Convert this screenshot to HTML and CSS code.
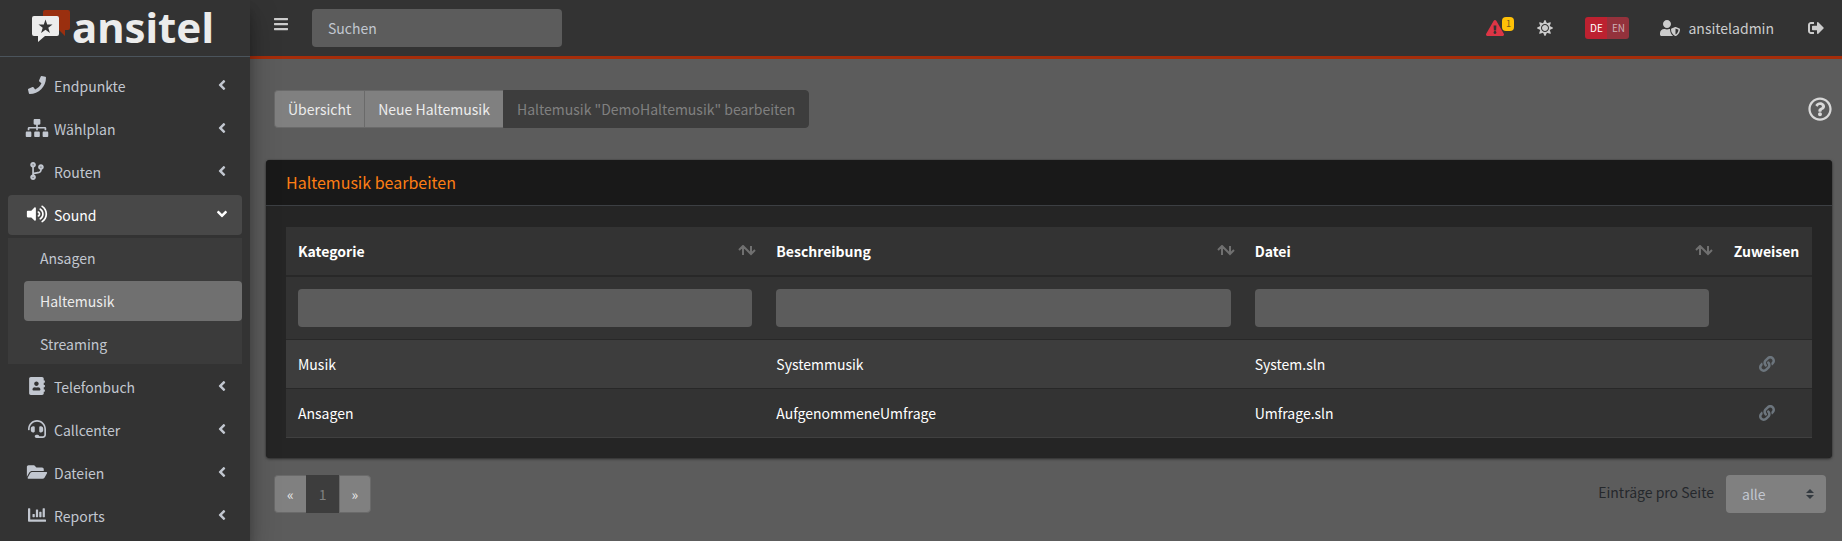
FILE: index.html
```html
<!DOCTYPE html>
<html lang="de">
<head>
    <meta charset="utf-8">
    <title>ansitel - Haltemusik bearbeiten</title>
    <link rel="stylesheet" href="styles.css">
</head>
<body>

<!-- icon set -->
<svg class="sprite" aria-hidden="true">
    <symbol id="bars" viewBox="0 0 448 512"><path d="M16 132h416c8.837 0 16-7.163 16-16V76c0-8.837-7.163-16-16-16H16C7.163 60 0 67.163 0 76v40c0 8.837 7.163 16 16 16zm0 160h416c8.837 0 16-7.163 16-16v-40c0-8.837-7.163-16-16-16H16c-8.837 0-16 7.163-16 16v40c0 8.837 7.163 16 16 16zm0 160h416c8.837 0 16-7.163 16-16v-40c0-8.837-7.163-16-16-16H16c-8.837 0-16 7.163-16 16v40c0 8.837 7.163 16 16 16z"/></symbol>
    <symbol id="phone" viewBox="0 0 512 512"><path d="M493.4 24.6l-104-24c-11.3-2.6-22.9 3.3-27.5 13.9l-48 112c-4.2 9.8-1.4 21.3 6.9 28l60.6 49.6c-36 76.7-98.9 140.5-177.2 177.2l-49.6-60.6c-6.8-8.3-18.2-11.1-28-6.9l-112 48C3.9 366.5-2 378.1.6 389.4l24 104C27.1 504.2 36.7 512 48 512c256.1 0 464-207.5 464-464 0-11.2-7.7-20.9-18.6-23.4z"/></symbol>
    <symbol id="sitemap" viewBox="0 0 640 512"><path d="M128 352H32c-17.67 0-32 14.33-32 32v96c0 17.67 14.33 32 32 32h96c17.67 0 32-14.33 32-32v-96c0-17.67-14.33-32-32-32zm-24-80h192v48h48v-48h192v48h48v-57.59c0-21.17-17.23-38.41-38.41-38.41H344v-64h40c17.67 0 32-14.33 32-32V32c0-17.67-14.33-32-32-32H256c-17.67 0-32 14.33-32 32v96c0 17.67 14.33 32 32 32h40v64H94.41C73.23 224 56 241.23 56 262.41V320h48v-48zm264 80h-96c-17.67 0-32 14.33-32 32v96c0 17.67 14.33 32 32 32h96c17.67 0 32-14.33 32-32v-96c0-17.67-14.33-32-32-32zm240 0h-96c-17.67 0-32 14.33-32 32v96c0 17.67 14.33 32 32 32h96c17.67 0 32-14.33 32-32v-96c0-17.67-14.33-32-32-32z"/></symbol>
    <symbol id="branch" viewBox="0 0 384 512"><path d="M384 144c0-44.2-35.8-80-80-80s-80 35.8-80 80c0 36.4 24.3 67.1 57.5 76.8-.6 16.1-4.2 28.5-11 36.9-15.4 19.2-49.3 22.4-85.2 25.7-28.2 2.6-57.4 5.4-81.3 16.9v-144c32.5-10.2 56-40.5 56-76.3 0-44.2-35.8-80-80-80S0 35.8 0 80c0 35.8 23.5 66.1 56 76.3v199.3C23.5 365.9 0 396.2 0 432c0 44.2 35.8 80 80 80s80-35.8 80-80c0-34-21.2-63.1-51.2-74.6 3.1-5.2 7.8-9.8 14.9-13.4 16.2-8.2 40.4-10.4 66.1-12.8 42.2-3.9 90-8.4 118.2-43.4 14-17.4 21.1-39.8 21.6-67.9 31.6-10.8 54.4-40.7 54.4-75.9zM80 64c8.8 0 16 7.2 16 16s-7.2 16-16 16-16-7.2-16-16 7.2-16 16-16zm0 384c-8.8 0-16-7.2-16-16s7.2-16 16-16 16 7.2 16 16-7.2 16-16 16zm224-320c8.8 0 16 7.2 16 16s-7.2 16-16 16-16-7.2-16-16 7.2-16 16-16z"/></symbol>
    <symbol id="volume" viewBox="0 0 576 512"><path d="M215.03 71.05L126.06 160H24c-13.26 0-24 10.74-24 24v144c0 13.25 10.74 24 24 24h102.06l88.97 88.95c15.03 15.03 40.97 4.47 40.97-16.97V88.02c0-21.46-25.96-31.98-40.97-16.97zm233.32-51.08c-11.17-7.33-26.18-4.24-33.51 6.95-7.34 11.17-4.22 26.18 6.95 33.51 66.27 43.49 105.82 116.6 105.82 195.58 0 78.98-39.55 152.09-105.82 195.58-11.17 7.32-14.29 22.34-6.95 33.5 7.04 10.71 21.93 14.56 33.51 6.95C528.27 439.58 576 351.33 576 256S528.27 72.43 448.35 19.97zM480 256c0-63.53-32.06-121.94-85.77-156.24-11.19-7.14-26.03-3.82-33.12 7.46s-3.78 26.21 7.41 33.36C408.27 165.97 432 209.11 432 256s-23.73 90.02-63.48 115.42c-11.19 7.14-14.5 22.07-7.41 33.36 6.51 10.36 21.12 15.14 33.12 7.46C447.94 377.94 480 319.54 480 256zm-141.77-76.87c-11.58-6.33-26.19-2.16-32.61 9.45-6.39 11.61-2.16 26.2 9.45 32.61C327.98 228.28 336 241.63 336 256c0 14.38-8.02 27.72-20.92 34.81-11.61 6.41-15.84 21-9.45 32.61 6.43 11.66 21.05 15.8 32.61 9.45 28.23-15.55 45.77-45 45.77-76.88s-17.54-61.32-45.78-76.86z"/></symbol>
    <symbol id="book" viewBox="0 0 448 512"><path d="M436 160c6.6 0 12-5.4 12-12v-40c0-6.6-5.4-12-12-12h-20V48c0-26.5-21.5-48-48-48H48C21.5 0 0 21.5 0 48v416c0 26.5 21.5 48 48 48h320c26.5 0 48-21.5 48-48v-48h20c6.6 0 12-5.4 12-12v-40c0-6.6-5.4-12-12-12h-20v-64h20c6.6 0 12-5.4 12-12v-40c0-6.6-5.4-12-12-12h-20v-64h20zm-228-32c35.3 0 64 28.7 64 64s-28.7 64-64 64-64-28.7-64-64 28.7-64 64-64zm112 236.8c0 10.6-10 19.2-22.4 19.2H118.4C106 384 96 375.4 96 364.8v-19.2c0-31.8 30.1-57.6 67.2-57.6h5c12.3 5.1 25.7 8 39.8 8s27.6-2.9 39.8-8h5c37.1 0 67.2 25.8 67.2 57.6v19.2z"/></symbol>
    <symbol id="headset" viewBox="0 0 512 512"><path d="M192 208c0-17.67-14.33-32-32-32h-16c-35.35 0-64 28.65-64 64v48c0 35.35 28.65 64 64 64h16c17.67 0 32-14.33 32-32V208zm176 144c35.35 0 64-28.65 64-64v-48c0-35.35-28.65-64-64-64h-16c-17.67 0-32 14.33-32 32v112c0 17.67 14.33 32 32 32h16zM256 0C113.18 0 4.58 118.83 0 256v16c0 8.84 7.16 16 16 16h16c8.84 0 16-7.16 16-16v-16c0-114.69 93.31-208 208-208s208 93.31 208 208h-.12c.08 2.43.12 165.72.12 165.72 0 23.35-18.93 42.28-42.28 42.28H320c0-26.51-21.49-48-48-48h-32c-26.51 0-48 21.49-48 48s21.49 48 48 48h181.72c49.86 0 90.28-40.42 90.28-90.28V256C507.42 118.83 398.82 0 256 0z"/></symbol>
    <symbol id="folder" viewBox="0 0 576 512"><path d="M572.694 292.093L500.27 416.248A63.997 63.997 0 0 1 444.989 448H45.025c-18.523 0-30.064-20.093-20.731-36.093l72.424-124.155A64 64 0 0 1 152 256h399.964c18.523 0 30.064 20.093 20.73 36.093zM152 224h328v-48c0-26.51-21.49-48-48-48H272l-64-64H48C21.49 64 0 85.49 0 112v278.046l69.077-118.418C86.214 242.25 117.989 224 152 224z"/></symbol>
    <symbol id="chart" viewBox="0 0 512 512"><path d="M332.8 320h38.4c6.4 0 12.8-6.4 12.8-12.8V172.8c0-6.4-6.4-12.8-12.8-12.8h-38.4c-6.4 0-12.8 6.4-12.8 12.8v134.4c0 6.4 6.4 12.8 12.8 12.8zm96 0h38.4c6.4 0 12.8-6.4 12.8-12.8V76.8c0-6.4-6.4-12.8-12.8-12.8h-38.4c-6.4 0-12.8 6.4-12.8 12.8v230.4c0 6.4 6.4 12.8 12.8 12.8zm-288 0h38.4c6.4 0 12.8-6.4 12.8-12.8v-70.4c0-6.4-6.4-12.8-12.8-12.8h-38.4c-6.4 0-12.8 6.4-12.8 12.8v70.4c0 6.4 6.4 12.8 12.8 12.8zm96 0h38.4c6.4 0 12.8-6.4 12.8-12.8V108.8c0-6.4-6.4-12.8-12.8-12.8h-38.4c-6.4 0-12.8 6.4-12.8 12.8v198.4c0 6.4 6.4 12.8 12.8 12.8zM496 384H64V80c0-8.84-7.16-16-16-16H16C7.16 64 0 71.16 0 80v336c0 17.67 14.33 32 32 32h464c8.84 0 16-7.16 16-16v-32c0-8.84-7.16-16-16-16z"/></symbol>
    <symbol id="angle" viewBox="0 0 256 512"><path d="M31.7 239l136-136c9.4-9.4 24.6-9.4 33.9 0l22.6 22.6c9.4 9.4 9.4 24.6 0 33.9L127.9 256l96.4 96.4c9.4 9.4 9.4 24.6 0 33.9L201.7 409c-9.4 9.4-24.6 9.4-33.9 0l-136-136c-9.5-9.4-9.5-24.6-.1-34z"/></symbol>
    <symbol id="warning" viewBox="0 0 576 512"><path d="M569.517 440.013C587.975 472.007 564.806 512 527.94 512H48.054c-36.937 0-59.999-40.055-41.577-71.987L246.423 23.985c18.467-32.009 64.72-31.951 83.154 0l239.94 416.028zM288 354c-25.405 0-46 20.595-46 46s20.595 46 46 46 46-20.595 46-46-20.595-46-46-46zm-43.673-165.346l7.418 136c.347 6.364 5.609 11.346 11.982 11.346h48.546c6.373 0 11.635-4.982 11.982-11.346l7.418-136c.375-6.874-5.098-12.654-11.982-12.654h-63.383c-6.884 0-12.356 5.78-11.981 12.654z"/></symbol>
    <symbol id="sun" viewBox="0 0 512 512"><path d="M256 160c-52.9 0-96 43.1-96 96s43.1 96 96 96 96-43.1 96-96-43.1-96-96-96zm246.4 80.5l-94.7-47.3 33.5-100.4c4.5-13.6-8.4-26.5-21.9-21.9l-100.4 33.5-47.4-94.8c-6.4-12.8-24.6-12.8-31 0l-47.3 94.7L92.7 70.8c-13.6-4.5-26.5 8.4-21.9 21.9l33.5 100.4-94.7 47.4c-12.8 6.4-12.8 24.6 0 31l94.7 47.3-33.5 100.5c-4.5 13.6 8.4 26.5 21.9 21.9l100.4-33.5 47.3 94.7c6.4 12.8 24.6 12.8 31 0l47.3-94.7 100.4 33.5c13.6 4.5 26.5-8.4 21.9-21.9l-33.5-100.4 94.7-47.3c13-6.5 13-24.7.2-31.1zm-155.9 106c-49.9 49.9-131.1 49.9-181 0-49.9-49.9-49.9-131.1 0-181 49.9-49.9 131.1-49.9 181 0 49.9 49.9 49.9 131.1 0 181z"/></symbol>
    <symbol id="user" viewBox="0 0 640 512"><path d="M622.3 271.1l-115.2-45c-4.1-1.6-12.6-3.7-22.2 0l-115.2 45c-10.7 4.2-17.7 14-17.7 24.9 0 111.6 68.7 188.8 132.9 213.9 9.6 3.7 18 1.6 22.2 0C558.4 489.9 640 420.5 640 296c0-10.9-7-20.7-17.7-24.9zM496 462.4V273.3l95.5 37.3c-5.6 87.1-60.9 135.4-95.5 151.8zM224 256c70.7 0 128-57.3 128-128S294.7 0 224 0 96 57.3 96 128s57.3 128 128 128zm96 40c0-2.5.8-4.8 1.1-7.2-2.5-.1-4.9-.8-7.5-.8h-16.7c-22.2 10.2-46.9 16-72.9 16s-50.6-5.8-72.9-16h-16.7C60.2 288 0 348.2 0 422.4V464c0 26.5 21.5 48 48 48h352c6.8 0 13.3-1.5 19.2-4-54-42.9-99.2-116.7-99.2-212z"/></symbol>
    <symbol id="logout" viewBox="0 0 512 512"><path d="M497 273L329 441c-15 15-41 4.5-41-17v-96H152c-13.3 0-24-10.7-24-24v-96c0-13.3 10.7-24 24-24h136V88c0-21.4 25.9-32 41-17l168 168c9.3 9.4 9.3 24.6 0 34zM192 436v-40c0-6.6-5.4-12-12-12H96c-17.7 0-32-14.3-32-32V160c0-17.7 14.3-32 32-32h84c6.6 0 12-5.4 12-12V76c0-6.6-5.4-12-12-12H96c-53 0-96 43-96 96v192c0 53 43 96 96 96h84c6.6 0 12-5.4 12-12z"/></symbol>
    <symbol id="question" viewBox="0 0 512 512"><path d="M256 8C119.043 8 8 119.083 8 256c0 136.997 111.043 248 248 248s248-111.003 248-248C504 119.083 392.957 8 256 8zm0 448c-110.532 0-200-89.431-200-200 0-110.495 89.472-200 200-200 110.491 0 200 89.471 200 200 0 110.53-89.431 200-200 200zm107.244-255.2c0 67.052-72.421 68.084-72.421 92.863V300c0 6.627-5.373 12-12 12h-45.647c-6.627 0-12-5.373-12-12v-8.659c0-35.745 27.1-50.034 47.579-61.516 17.561-9.845 28.324-16.541 28.324-29.579 0-17.246-21.999-28.693-39.784-28.693-23.189 0-33.894 10.977-48.942 29.969-4.057 5.12-11.46 6.071-16.666 2.124l-27.824-21.098c-5.107-3.872-6.251-11.066-2.644-16.363C184.846 131.491 214.94 112 261.794 112c49.071 0 101.45 38.304 101.45 88.8zM298 368c0 23.159-18.841 42-42 42s-42-18.841-42-42 18.841-42 42-42 42 18.841 42 42z"/></symbol>
    <symbol id="chain" viewBox="0 0 512 512"><path d="M326.612 185.391c59.747 59.809 58.927 155.698.36 214.59-.11.12-.24.25-.36.37l-67.2 67.2c-59.27 59.27-155.699 59.262-214.96 0-59.27-59.26-59.27-155.7 0-214.96l37.106-37.106c9.84-9.84 26.786-3.3 27.294 10.606.648 17.722 3.826 35.527 9.69 52.721 1.986 5.822.567 12.262-3.783 16.612l-13.087 13.087c-28.026 28.026-28.905 73.66-1.155 101.96 28.024 28.579 74.086 28.749 102.325.51l67.2-67.19c28.191-28.191 28.073-73.757 0-101.83-3.701-3.694-7.429-6.564-10.341-8.569a16.037 16.037 0 0 1-6.947-12.606c-.396-10.567 3.348-21.456 11.698-29.806l21.054-21.055c5.521-5.521 14.182-6.199 20.584-1.731a152.482 152.482 0 0 1 20.522 17.197zM467.547 44.449c-59.261-59.262-155.69-59.27-214.96 0l-67.2 67.2c-.12.12-.25.25-.36.37-58.566 58.892-59.387 154.781.36 214.59a152.454 152.454 0 0 0 20.521 17.196c6.402 4.468 15.064 3.789 20.584-1.731l21.054-21.055c8.35-8.35 12.094-19.239 11.698-29.806a16.037 16.037 0 0 0-6.947-12.606c-2.912-2.005-6.64-4.875-10.341-8.569-28.073-28.073-28.191-73.639 0-101.83l67.2-67.19c28.239-28.239 74.3-28.069 102.325.51 27.75 28.3 26.872 73.934-1.155 101.96l-13.087 13.087c-4.35 4.35-5.769 10.79-3.783 16.612 5.864 17.194 9.042 34.999 9.69 52.721.509 13.906 17.454 20.446 27.294 10.606l37.106-37.106c59.271-59.259 59.271-155.699.001-214.959z"/></symbol>
    <symbol id="sort" viewBox="0 0 18 12"><path d="M1 5l4-4 8 8 4-4M5 1v9M13 1v8" fill="none" stroke="currentColor" stroke-width="2"/></symbol>
</svg>

<div class="wrapper">
    <aside class="sidebar">
        <a href="#" class="brand">
            <svg class="brand-icon" viewBox="0 0 38 33" aria-hidden="true">
                <path fill="#9a2f0f" d="M13 0h23q2 0 2 2v16q0 2-2 2h-3v6l-6-6H11V2q0-2 2-2z"/>
                <path fill="#ececec" d="M2 6h23q2 0 2 2v16q0 2-2 2H13l-7 6v-6H2q-2 0-2-2V8q0-2 2-2z"/>
                <path fill="#333" d="M13.500 9.500l1.700 5h5.300l-4.200 3.200 1.600 5.300-4.400-3.300L9.100 23l1.600-5.300-4.200-3.200h5.300z"/>
            </svg>
            <span class="brand-text">ansitel</span>
        </a>
        <nav class="menu">
            <a href="#" class="menu-link"><svg class="menu-icon"><use href="#phone"/></svg>Endpunkte<svg class="arrow"><use href="#angle"/></svg></a>
            <a href="#" class="menu-link"><svg class="menu-icon"><use href="#sitemap"/></svg>Wählplan<svg class="arrow"><use href="#angle"/></svg></a>
            <a href="#" class="menu-link"><svg class="menu-icon"><use href="#branch"/></svg>Routen<svg class="arrow"><use href="#angle"/></svg></a>
            <a href="#" class="menu-link open"><svg class="menu-icon"><use href="#volume"/></svg>Sound<svg class="arrow"><use href="#angle"/></svg></a>
            <div class="submenu">
                <a href="#" class="submenu-link">Ansagen</a>
                <a href="#" class="submenu-link active">Haltemusik</a>
                <a href="#" class="submenu-link">Streaming</a>
            </div>
            <a href="#" class="menu-link"><svg class="menu-icon"><use href="#book"/></svg>Telefonbuch<svg class="arrow"><use href="#angle"/></svg></a>
            <a href="#" class="menu-link"><svg class="menu-icon"><use href="#headset"/></svg>Callcenter<svg class="arrow"><use href="#angle"/></svg></a>
            <a href="#" class="menu-link"><svg class="menu-icon"><use href="#folder"/></svg>Dateien<svg class="arrow"><use href="#angle"/></svg></a>
            <a href="#" class="menu-link"><svg class="menu-icon"><use href="#chart"/></svg>Reports<svg class="arrow"><use href="#angle"/></svg></a>
        </nav>
    </aside>

    <div class="page">
        <header class="topbar">
            <button class="toggle" aria-label="Menü"><svg><use href="#bars"/></svg></button>
            <input class="control search" type="search" placeholder="Suchen" aria-label="Suchen">
            <div class="topbar-right">
                <a href="#" class="alert" aria-label="Warnungen"><svg class="icon-warning"><use href="#warning"/></svg><span class="badge">1</span></a>
                <button class="theme" aria-label="Design"><svg class="icon"><use href="#sun"/></svg></button>
                <div class="lang">
                    <button class="lang-button">DE</button>
                    <button class="lang-button inactive">EN</button>
                </div>
                <a href="#" class="account"><svg class="icon-user"><use href="#user"/></svg>ansiteladmin</a>
                <a href="#" class="logout" aria-label="Abmelden"><svg class="icon"><use href="#logout"/></svg></a>
            </div>
        </header>

        <main class="content">
            <div class="toolbar">
                <div class="group">
                    <a href="#" class="group-item">Übersicht</a>
                    <a href="#" class="group-item">Neue Haltemusik</a>
                    <span class="group-item current">Haltemusik "DemoHaltemusik" bearbeiten</span>
                </div>
                <a href="#" class="help" aria-label="Hilfe"><svg><use href="#question"/></svg></a>
            </div>

            <section class="card">
                <h1 class="card-header">Haltemusik bearbeiten</h1>
                <div class="card-body">
                    <table class="table">
                        <thead>
                            <tr>
                                <th><div class="sortable">Kategorie<svg><use href="#sort"/></svg></div></th>
                                <th><div class="sortable">Beschreibung<svg><use href="#sort"/></svg></div></th>
                                <th><div class="sortable">Datei<svg><use href="#sort"/></svg></div></th>
                                <th class="assign">Zuweisen</th>
                            </tr>
                        </thead>
                        <tbody>
                            <tr>
                                <td><input class="control" type="text" aria-label="Kategorie filtern"></td>
                                <td><input class="control" type="text" aria-label="Beschreibung filtern"></td>
                                <td><input class="control" type="text" aria-label="Datei filtern"></td>
                                <td></td>
                            </tr>
                            <tr class="striped">
                                <td>Musik</td>
                                <td>Systemmusik</td>
                                <td>System.sln</td>
                                <td class="assign"><a href="#" aria-label="Zuweisen"><svg class="icon"><use href="#chain"/></svg></a></td>
                            </tr>
                            <tr>
                                <td>Ansagen</td>
                                <td>AufgenommeneUmfrage</td>
                                <td>Umfrage.sln</td>
                                <td class="assign"><a href="#" aria-label="Zuweisen"><svg class="icon"><use href="#chain"/></svg></a></td>
                            </tr>
                        </tbody>
                    </table>
                </div>
            </section>

            <div class="footer">
                <nav class="group" aria-label="Seiten">
                    <a href="#" class="group-item">«</a>
                    <span class="group-item current">1</span>
                    <a href="#" class="group-item">»</a>
                </nav>
                <div class="per-page">
                    <label for="perPage">Einträge pro Seite</label>
                    <div class="select">
                        <select id="perPage">
                            <option>alle</option>
                            <option>10</option>
                            <option>25</option>
                        </select>
                        <svg viewBox="0 0 8 10" aria-hidden="true"><path d="M4 0l4 4H0zM0 6h8l-4 4z"/></svg>
                    </div>
                </div>
            </div>
        </main>
    </div>
</div>

</body>
</html>
```

FILE: styles.css
```css
* {
    box-sizing: border-box;
}

body {
    margin: 0;
    background-color: #5c5c5c;
    color: #fff;
    font-family: "Noto Sans CJK JP", "Noto Sans", sans-serif;
    font-size: 14px;
    line-height: 24px;
}

a {
    color: inherit;
    text-decoration: none;
}

button {
    padding: 0;
    border: none;
    background: none;
    color: inherit;
    font: inherit;
    cursor: pointer;
}

svg {
    display: block;
    fill: currentColor;
}

.sprite {
    display: none;
}

.wrapper {
    display: flex;
    min-height: 100vh;
}

/* sidebar */
.sidebar {
    position: relative;
    z-index: 2;
    flex: 0 0 250px;
    background-color: #333;
    color: #c2c7d0;
    box-shadow: 0 14px 28px rgba(0, 0, 0, 0.25), 0 10px 10px rgba(0, 0, 0, 0.22);
}

.brand {
    display: flex;
    gap: 2px;
    height: 57px;
    padding: 10px 32px;
    border-bottom: 1px solid #4b545c;
}

.brand-icon {
    flex: none;
    width: 38px;
    height: 33px;
}

.brand-text {
    color: #ececec;
    font-family: "Noto Sans", sans-serif;
    font-size: 42px;
    font-weight: 700;
    line-height: 34px;
}

.menu {
    display: flex;
    flex-direction: column;
    gap: 3px;
    padding: 9px 8px 0;
}

.menu-link {
    display: flex;
    align-items: center;
    gap: 4px;
    height: 40px;
    padding: 0 16px;
    border-radius: 4px;
}

.menu-icon {
    width: 26px;
    height: 18px;
    margin-bottom: 2px;
}

.arrow {
    width: 8px;
    height: 16px;
    margin-left: auto;
    margin-bottom: 2px;
}

.open {
    background-color: #484848;
    color: #fff;
}

.open .arrow {
    transform: rotate(-90deg);
}

.submenu {
    display: flex;
    flex-direction: column;
    gap: 3px;
    padding-left: 16px;
    background-color: #3b3b3b;
}

.submenu-link {
    padding: 8px 16px;
    border-radius: 4px;
}

.submenu-link.active {
    background-color: #707070;
    color: #ececec;
}

/* top bar */
.page {
    flex: 1;
    min-width: 0;
}

.topbar {
    display: flex;
    align-items: center;
    height: 59px;
    padding: 0 18px 0 24px;
    border-bottom: 3px solid #a52d0a;
    background-color: #333;
    color: #ccc;
}

.toggle {
    margin-bottom: 8px;
}

.toggle svg {
    width: 14px;
    height: 16px;
}

.control {
    display: block;
    width: 100%;
    height: 38px;
    padding: 0 16px;
    border: none;
    border-radius: 4px;
    background-color: #5c5c5c;
    color: #fff;
    font: inherit;
}

.search {
    width: 250px;
    margin-left: 24px;
}

.search::placeholder {
    color: #c2c7d0;
    opacity: 1;
}

.topbar-right {
    display: flex;
    align-items: center;
    margin-left: auto;
}

.icon {
    width: 16px;
    height: 16px;
}

.alert {
    position: relative;
    color: #dc3545;
}

.icon-warning {
    width: 18px;
    height: 16px;
}

.badge {
    position: absolute;
    top: -3px;
    left: 16px;
    width: 12px;
    border-radius: 4px;
    background-color: #ffc107;
    color: #705a1c;
    font-size: 9px;
    line-height: 14px;
    text-align: center;
}

.theme {
    margin-left: 33px;
}

.lang {
    display: flex;
    margin-left: 32px;
    border-radius: 3px;
    overflow: hidden;
}

.lang-button {
    width: 22px;
    background-color: #bd2130;
    color: #fff;
    font-size: 10px;
    line-height: 22px;
}

.lang-button.inactive {
    background-color: #94323c;
    color: #ccb0b4;
}

.account {
    display: flex;
    align-items: center;
    gap: 8px;
    margin-left: 31px;
}

.icon-user {
    width: 20px;
    height: 16px;
}

.logout {
    margin-left: 34px;
}

/* content */
.content {
    padding: 31px 10px 28px 16px;
}

.toolbar {
    display: flex;
    align-items: center;
    justify-content: space-between;
    padding-left: 8px;
}

.group {
    display: flex;
    height: 38px;
}

.group-item {
    padding: 6px 12px;
    border: 1px solid #6a6a6a;
    border-right-width: 0;
    background-color: #808080;
    color: #ececec;
}

.toolbar .group-item {
    padding: 6px 13px;
}

.group-item:first-child {
    border-radius: 4px 0 0 4px;
}

.group-item:last-child {
    border-right-width: 1px;
    border-radius: 0 4px 4px 0;
}

.group-item.current {
    border-color: #3d3d3d;
    background-color: #3d3d3d;
    color: #808080;
}

.help {
    color: #d8d8d8;
}

.help svg {
    width: 24px;
    height: 24px;
}

.card {
    margin-top: 32px;
    border-radius: 4px;
    background-color: #252525;
    box-shadow: 0 0 1px rgba(0, 0, 0, 0.5), 0 1px 3px rgba(0, 0, 0, 0.5);
}

.card-header {
    margin: 0;
    padding: 10px 20px 11px;
    border-bottom: 1px solid #3c3f43;
    border-radius: 4px 4px 0 0;
    background-color: #191919;
    color: #fd7e14;
    font-size: 16px;
    font-weight: 400;
    line-height: 24px;
}

.card-body {
    padding: 21px 20px 20px;
}

.table {
    width: 100%;
    table-layout: fixed;
    border-collapse: collapse;
    border-bottom: 1px solid #404040;
    background-color: #333;
}

.table th,
.table td {
    padding: 12px;
    text-align: left;
}

.table th {
    border-bottom: 2px solid #282828;
    font-weight: 700;
}

.table tr + tr td {
    border-top: 1px solid #282828;
}

.table th.assign {
    width: 91px;
}

.table .assign {
    padding: 12px 11px;
    text-align: center;
}

.striped {
    background-color: #3d3d3d;
}

.sortable {
    display: flex;
    justify-content: space-between;
}

.sortable svg {
    width: 18px;
    height: 12px;
    margin: 6px -4px 0 0;
    color: #707070;
}

.assign a {
    display: inline-block;
    color: #6c757d;
    vertical-align: -2px;
}

.footer {
    display: flex;
    justify-content: space-between;
    margin-top: 17px;
    padding: 0 6px 0 8px;
}

.per-page {
    display: flex;
    gap: 12px;
    color: #25282c;
    line-height: 34px;
}

.select {
    position: relative;
    width: 100px;
}

.select select {
    width: 100%;
    height: 38px;
    padding: 0 16px;
    border: none;
    border-radius: 4px;
    background-color: #808080;
    color: #c2c7d0;
    font: inherit;
    appearance: none;
}

.select svg {
    position: absolute;
    top: 14px;
    right: 12px;
    width: 8px;
    height: 10px;
    fill: #343a40;
    pointer-events: none;
}
```
